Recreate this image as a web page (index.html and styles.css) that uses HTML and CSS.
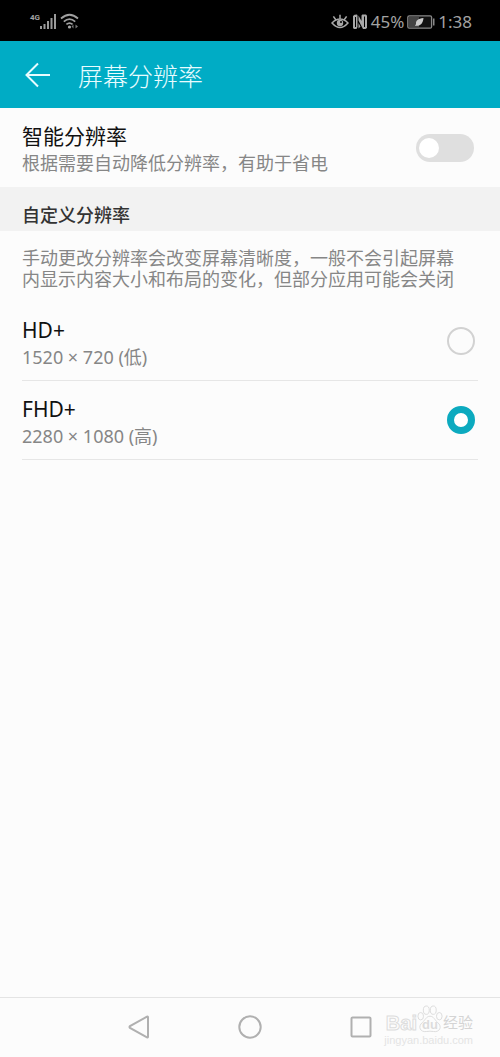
FILE: index.html
```html
<!DOCTYPE html>
<html lang="zh-CN">
<head>
<meta charset="utf-8">
<meta name="viewport" content="width=device-width, initial-scale=1">
<title>屏幕分辨率</title>
<link rel="stylesheet" href="styles.css">
</head>
<body>
<div class="status">
  <div class="status-group network">
    <span class="network-type">4G</span>
    <svg class="signal" width="17" height="18" viewBox="0 0 17 18" aria-hidden="true">
      <path fill="#9a9a9a" d="M0 13h2v3H0zM3.500 11h2v5h-2zM7 8h2v8H7zM10.500 5h2v11h-2zM14 1h2v15h-2z"/>
    </svg>
    <svg class="wifi" width="20" height="18" viewBox="0 0 20 18" aria-hidden="true">
      <g fill="none" stroke="#a0a0a0" stroke-width="1.700"><path d="M1 5.500Q9.500-2 18 5.500M3.800 8.600Q9.500 3.600 15.200 8.600M6.400 11.400Q9.500 8.800 12.600 11.400"/></g>
      <circle cx="9.500" cy="14" r="1.600" fill="#a8a8a8"/><path d="M13.500 11.500v4l-2-2zM15.500 11.500v4l2.500-2z" fill="#777"/>
    </svg>
  </div>
  <div class="status-group">
    <svg width="18" height="16" viewBox="0 0 18 16" aria-hidden="true">
      <g fill="none" stroke="#a8a8a8" stroke-width="1.500"><path d="M1 9Q9 1 17 9Q9 18 1 9zM9 4.500V.8M4.600 5.500L2.400 2.300M13.400 5.500l2.200-3.200"/></g><circle cx="9" cy="9" r="3.200" fill="#a8a8a8"/><circle cx="10" cy="8" r="1" fill="#000"/>
    </svg>
    <svg width="16" height="16" viewBox="0 0 16 16" aria-hidden="true">
      <path fill="#a8a8a8" d="M1 2L2.500.8 5 .5l.5 1V13l-1 2H2l-1-1zM6.500 1.500L9.500 7V1.500l.8-1H14l1 1.300V14l-1.500 1H11L6.500 6.500z"/><path fill="#000" d="M3 3h1v10H3zM12 2.500h1V13h-1z"/><path fill="#a8a8a8" d="M6.500 9l2 3.500-2 2z"/>
    </svg>
    <span>45%</span>
    <svg class="battery" width="28" height="14" viewBox="0 0 28 14" aria-hidden="true">
      <rect x=".8" y=".8" width="23.800" height="12.400" rx="1.500" fill="#111" stroke="#888" stroke-width="1.300"/><path fill="#444" d="M2 2h10v10H2z"/><path fill="#888" d="M26 3.500h1.500v7H26z"/><path fill="#ccc" d="M16.500 3C11 3.500 8.500 5.500 9 9L8 11l1.200-.2C14 11 16 8 16.500 3z"/>
    </svg>
    <span>1:38</span>
  </div>
</div>
<header class="bar">
  <button class="back" type="button" aria-label="返回">
    <svg width="26" height="26" viewBox="0 0 26 26" aria-hidden="true"><path d="M13 1.500L1.500 13 13 24.500M1.500 13H25" fill="none" stroke="#e8fcff" stroke-width="2"/></svg>
  </button>
  <h1 class="title">屏幕分辨率</h1>
</header>
<main class="content">
  <label class="row smart">
    <span class="row-text"><span class="name">智能分辨率</span><span class="detail">根据需要自动降低分辨率，有助于省电</span></span>
    <input class="switch" type="checkbox" role="switch">
  </label>
  <h2 class="section">自定义分辨率</h2>
  <p class="note">手动更改分辨率会改变屏幕清晰度，一般不会引起屏幕内显示内容大小和布局的变化，但部分应用可能会关闭</p>
  <div class="options">
    <label class="row option">
      <span class="row-text"><span class="name">HD+</span><span class="detail">1520 × 720 (低)</span></span>
      <input class="radio" type="radio" name="resolution">
    </label>
    <label class="row option">
      <span class="row-text"><span class="name">FHD+</span><span class="detail">2280 × 1080 (高)</span></span>
      <input class="radio" type="radio" name="resolution" checked>
    </label>
  </div>
</main>
<nav class="nav">
  <button class="key" type="button" aria-label="后退"><svg width="24" height="24" viewBox="0 0 24 24"><path d="M21 2.200v19.600q0 1-1 .5L3 13q-1-1 0-2L20 1.700q1-.5 1 .5z"/></svg></button>
  <button class="key" type="button" aria-label="主页"><svg width="24" height="24" viewBox="0 0 24 24"><circle cx="12" cy="12" r="10.700"/></svg></button>
  <button class="key" type="button" aria-label="最近"><svg width="24" height="24" viewBox="0 0 24 24"><rect x="2.500" y="2.500" width="19" height="19" rx="1"/></svg></button>
  <div class="watermark">
    <div class="brand"><span class="brand-latin">Bai</span>
      <span class="paw"><svg width="26" height="30" viewBox="0 0 28 30" aria-hidden="true"><ellipse cx="4" cy="12" rx="3" ry="4"/><ellipse cx="10" cy="5.500" rx="3.200" ry="4.500"/><ellipse cx="17.500" cy="5.500" rx="3.200" ry="4.500"/><ellipse cx="24" cy="12" rx="3" ry="4"/><path d="M14 12c-4 0-5 4-8 6.500-6 5-2 11 4 10 3-.5 5-.5 8 0 6 1 10-5 4-10C19 16 18 12 14 12z"/></svg><span class="du">du</span></span>
      <span class="brand-cjk">经验</span></div>
    <div class="site">jingyan.baidu.com</div>
  </div>
</nav>
</body>
</html>
```
FILE: styles.css
```css
* { box-sizing: border-box; }
body {
  margin: 0;
  min-height: 100vh;
  display: flex;
  flex-direction: column;
  background: #fcfcfc;
  color: #111;
  font-family: "Noto Sans", "Noto Sans CJK SC", sans-serif;
}
button { border: 0; padding: 0; background: none; }
svg { display: block; }
.status {
  height: 41px;
  padding: 2px 28px 0 30px;
  display: flex;
  align-items: center;
  justify-content: space-between;
  background: #000;
  color: #a3a3a3;
  font-size: 17px;
}
.status-group { display: flex; align-items: center; gap: 3px; }
.network { gap: 0; }
.network-type {
  align-self: flex-start;
  font-family: Roboto, sans-serif;
  font-size: 8px;
  font-weight: 700;
  line-height: 9px;
}
.wifi { margin-left: 3px; }
.bar {
  height: 67px;
  padding: 0 26px 0 25px;
  display: flex;
  align-items: center;
  gap: 27px;
  background: #00acc5;
}
.title {
  margin: 0;
  padding-top: 2px;
  color: #e8fcff;
  font-size: 25px;
  font-weight: 300;
  line-height: 36px;
}
.content { flex: 1; }
.row {
  height: 79px;
  display: flex;
  align-items: center;
  justify-content: space-between;
}
.row-text { display: flex; flex-direction: column; padding-top: 4px; }
.name { font-size: 21px; line-height: 27px; }
.detail { color: #868686; font-size: 18px; line-height: 26px; }
.smart { padding: 0 26px 0 22px; }
.switch {
  appearance: none;
  width: 58px;
  height: 28px;
  margin: 0;
  padding: 3px;
  border-radius: 14px;
  background: #dfdfdf;
}
.switch::before {
  content: "";
  display: block;
  width: 20px;
  height: 20px;
  margin: 1px 0;
  border-radius: 50%;
  background: #fff;
}
.switch:checked { background: #00acc5; }
.switch:checked::before { margin-left: auto; }
.section {
  margin: 0;
  padding: 11px 22px 0;
  height: 44px;
  background: #f2f2f2;
  color: #333;
  font-size: 18px;
  font-weight: 500;
  line-height: 34px;
}
.note {
  margin: 0;
  padding: 17px 40px 12px 22px;
  color: #868686;
  font-size: 18px;
  line-height: 21px;
}
.options { padding: 0 22px; }
.option { padding-right: 3px; border-bottom: 1px solid #e6e6e6; }
.radio {
  appearance: none;
  width: 28px;
  height: 28px;
  margin: 0;
  border: 2px solid #d2d2d2;
  border-radius: 50%;
}
.radio:checked { border: 7px solid #0caabf; background: #fff; }
.nav {
  position: relative;
  height: 60px;
  padding: 0 83px 2px;
  display: grid;
  grid-template-columns: repeat(3, 1fr);
  place-items: center;
  border-top: 1px solid #e4e4e4;
}
.key svg { fill: none; stroke: #b0b0b0; stroke-width: 2; }
.watermark {
  position: absolute;
  right: 27px;
  bottom: 11px;
  color: #fcfcfc;
  font-family: "Liberation Sans", "Noto Sans CJK SC", sans-serif;
}
.brand { display: flex; align-items: flex-end; justify-content: flex-end; }
.brand-latin { font-size: 20px; font-weight: 700; line-height: 22px; -webkit-text-stroke: 1px #dcdcdc; }
.brand-cjk { color: #d4d4d4; font-size: 15px; line-height: 22px; }
.paw { display: grid; place-items: end center; }
.paw > * { grid-area: 1 / 1; }
.paw svg { fill: #fcfcfc; stroke: #dadada; }
.du { color: #dcdcdc; font-size: 13px; font-weight: 700; line-height: 18px; }
.site { color: #e4e4e4; font-size: 11px; line-height: 12px; }
```
